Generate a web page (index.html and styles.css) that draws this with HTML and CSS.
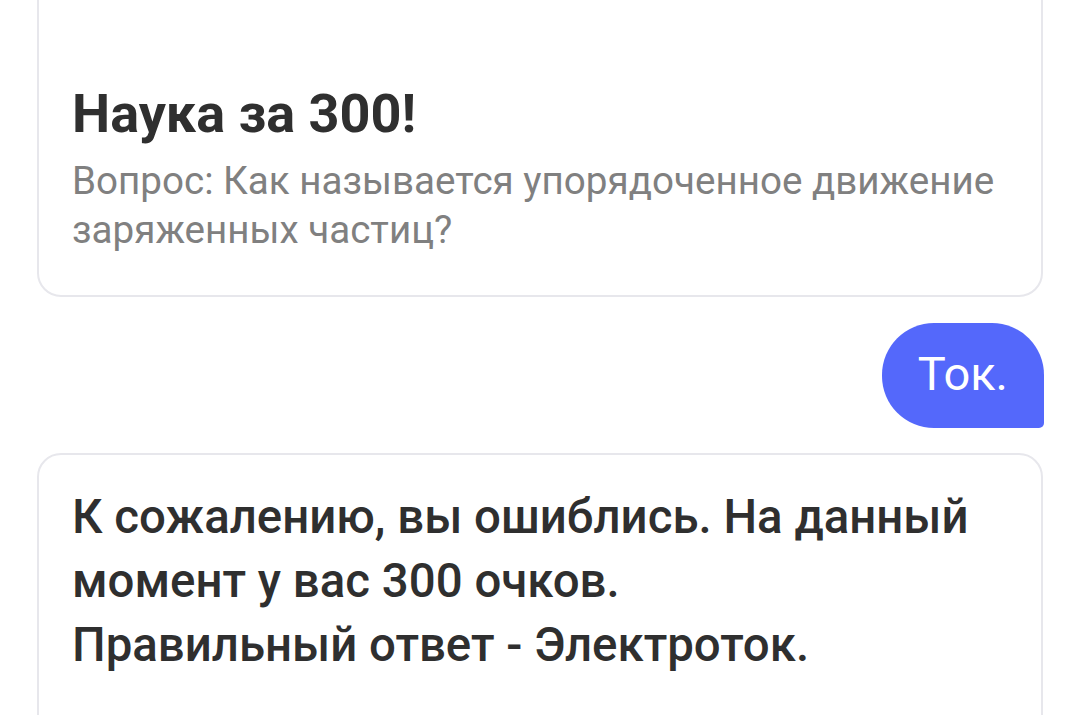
FILE: index.html
```html
<!DOCTYPE html>
<html lang="ru">
<head>
<meta charset="utf-8">
<title>Чат</title>
<link rel="stylesheet" href="styles.css">
</head>
<body>
<main class="feed">
  <section class="card card-question">
    <h2 class="card-title">Наука за 300!</h2>
    <p class="card-sub">Вопрос: Как называется упорядоченное движение заряженных частиц?</p>
  </section>
  <div class="row-user">
    <div class="bubble">Ток.</div>
  </div>
  <section class="card card-answer">
    <p class="card-text">К сожалению, вы ошиблись. На данный момент у вас 300 очков.<br>Правильный ответ - Электроток.</p>
  </section>
</main>
</body>
</html>
```

FILE: styles.css
```css
html, body {
  margin: 0;
  padding: 0;
  background: #ffffff;
  overflow: hidden;
}
body {
  font-family: Roboto, "Noto Sans", sans-serif;
  color: #2f2f2f;
  height: 715px;
}
.feed {
  display: flex;
  flex-direction: column;
  gap: 26px;
  padding: 0 37px;
  margin-top: -40px;
}
.card {
  border: 2px solid #e7e7ec;
  border-radius: 24px;
  background: #fff;
  padding: 0 33px;
}
.card-question {
  padding-top: 122px;
  padding-bottom: 41px;
}
.card-title {
  margin: 0;
  font-size: 54px;
  line-height: 60px;
  font-weight: 700;
  color: #2f2f2f;
}
.card-sub {
  margin: 12px 0 0;
  font-size: 38.6px;
  line-height: 49px;
  color: #808080;
  font-weight: 400;
}
.row-user {
  display: flex;
  justify-content: flex-end;
  margin-right: -1px;
}
.bubble {
  background: #5468fb;
  color: #fff;
  font-size: 47px;
  line-height: 64px;
  padding: 19px 36px 22px;
  border-radius: 52px 52px 5px 52px;
}
.card-answer {
  padding-top: 30px;
  padding-bottom: 60px;
  margin-top: -1px;
}
.card-text {
  margin: 0;
  font-size: 47.4px;
  line-height: 64px;
  font-weight: 500;
  color: #2f2f2f;
}
```
